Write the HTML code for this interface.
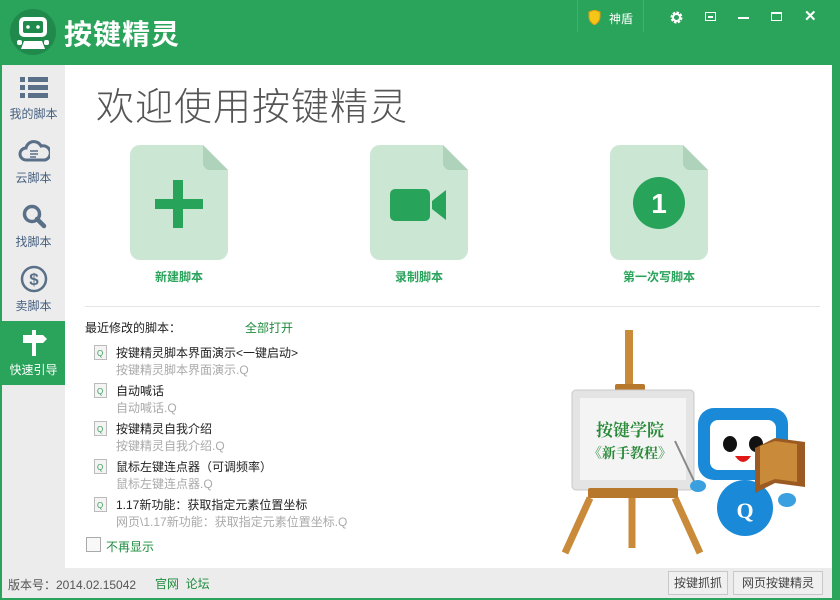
<!DOCTYPE html>
<html><head><meta charset="utf-8"><style>
*{margin:0;padding:0;box-sizing:border-box}
body{width:840px;height:600px;overflow:hidden;font-family:"Liberation Sans","Noto Sans CJK SC",sans-serif;background:#2aa35b;position:relative}
.hdr{position:absolute;left:0;top:0;width:840px;height:65px;background:#2aa35b}
.title{position:absolute;left:64px;top:13px;color:#fff;font-size:28px;font-weight:bold;letter-spacing:1px}
.side{position:absolute;left:2px;top:65px;width:63px;height:503px;background:#ececec}
.nav{position:absolute;left:0;width:63px;height:64px;text-align:center;font-size:12px;color:#466080}
.nav svg{display:block;margin:10px auto 4px}
.main{position:absolute;left:65px;top:65px;width:767px;height:503px;background:#fff}
.foot{position:absolute;left:2px;top:568px;width:830px;height:30px;background:#ececec;font-size:12px;color:#555}
.h1{position:absolute;left:96px;top:76px;font-size:38px;color:#555;letter-spacing:1px;font-family:"Noto Sans CJK SC",sans-serif;font-weight:200}
.tile{position:absolute;top:145px;width:98px;height:115px}
.lbl{position:absolute;top:268px;font-size:12px;color:#2aa35b;font-weight:bold;text-align:center;width:140px}
.it{position:absolute;left:96px;font-size:12px}
.it .a{position:absolute;left:20px;top:0;color:#222;white-space:nowrap}
.it .b{position:absolute;left:20px;top:17px;color:#aaa;white-space:nowrap}
.btn{position:absolute;top:571px;height:24px;border:1px solid #c8c8c8;background:#f0f0f0;font-size:12px;color:#444;text-align:center;line-height:22px}
</style></head><body>
<div class="hdr">
<svg style="position:absolute;left:10px;top:9px" width="46" height="46" viewBox="0 0 46 46"><circle cx="23" cy="23" r="23" fill="#1f8a4c"/><rect x="9" y="8" width="28" height="20" rx="5" fill="#fff"/><rect x="13" y="12" width="20" height="12" rx="2" fill="#1f8a4c"/><circle cx="18" cy="18" r="1.8" fill="#fff"/><circle cx="28" cy="18" r="1.8" fill="#fff"/><path d="M14 32h18l3 8H11z" fill="#fff"/><rect x="7" y="31" width="5" height="5" rx="2" fill="#fff"/><rect x="34" y="31" width="5" height="5" rx="2" fill="#fff"/></svg>
<div class="title">按键精灵</div>
<div style="position:absolute;left:577px;top:0;width:1px;height:32px;background:#3bb46a"></div>
<div style="position:absolute;left:643px;top:0;width:1px;height:32px;background:#3bb46a"></div>
<svg style="position:absolute;left:588px;top:10px" width="13" height="15" viewBox="0 0 13 15"><path d="M1 2L6.5 0 12 2v5c0 4-3 6.5-5.5 8C4 13.5 1 11 1 7z" fill="#f5c518" stroke="#e09a10"/></svg>
<div style="position:absolute;left:609px;top:10px;color:#fff;font-size:12px">神盾</div>
<svg style="position:absolute;left:670px;top:11px" width="13" height="13" viewBox="0 0 13 13"><circle cx="6.5" cy="6.5" r="4.5" fill="none" stroke="#fff" stroke-width="3" stroke-dasharray="2.3 1.2"/><circle cx="6.5" cy="6.5" r="3.5" fill="none" stroke="#fff" stroke-width="2"/></svg>
<div style="position:absolute;left:705px;top:12px;width:11px;height:9px;border:1.5px solid #fff"></div><div style="position:absolute;left:708px;top:16px;width:5px;height:2px;background:#fff"></div>
<div style="position:absolute;left:738px;top:17px;width:11px;height:2px;background:#fff"></div>
<div style="position:absolute;left:771px;top:12px;width:11px;height:9px;border:1.5px solid #fff;border-top-width:2px"></div>
<div style="position:absolute;left:804px;top:7px;color:#fff;font-size:15px;font-weight:bold">✕</div>
</div>
<div class="side">
<div class="nav" style="top:0"><svg width="30" height="26" viewBox="0 0 30 26"><g fill="#5a7088"><rect x="1" y="2" width="5" height="5"/><rect x="9" y="2" width="20" height="5"/><rect x="1" y="10" width="5" height="5"/><rect x="9" y="10" width="20" height="5"/><rect x="1" y="18" width="5" height="5"/><rect x="9" y="18" width="20" height="5"/></g></svg>我的脚本</div>
<div class="nav" style="top:64px"><svg width="32" height="26" viewBox="0 0 32 26"><path d="M8 21a6 6 0 010-12 8 8 0 0115-2 6 6 0 014 14z" fill="none" stroke="#5a7088" stroke-width="3"/><path d="M12 12h8M12 15h8M12 18h6" stroke="#5a7088" stroke-width="1.5"/></svg>云脚本</div>
<div class="nav" style="top:128px"><svg width="30" height="26" viewBox="0 0 30 26"><circle cx="13" cy="11" r="7.5" fill="none" stroke="#5a7088" stroke-width="3.5"/><path d="M18 16l7 7" stroke="#5a7088" stroke-width="4.5" stroke-linecap="round"/></svg>找脚本</div>
<div class="nav" style="top:192px"><svg width="30" height="28" viewBox="0 0 30 28" style="margin-top:8px"><circle cx="15" cy="14" r="12" fill="none" stroke="#5a7088" stroke-width="2.5"/><text x="15" y="20" font-size="17" font-weight="bold" text-anchor="middle" fill="#5a7088" font-family="Liberation Sans">$</text></svg>卖脚本</div>
<div class="nav" style="top:256px;background:#2aa35b;color:#fff"><svg width="30" height="28" viewBox="0 0 30 28" style="margin-top:8px"><path d="M13 1h4v5h-4zM4 6h20l4 4-4 4H4z" fill="#fff"/><rect x="13" y="14" width="4" height="13" fill="#fff"/></svg>快速引导</div>
</div>
<div style="position:absolute;left:58px;top:336px;width:0;height:0;border:7px solid transparent;border-right-color:#fff"></div>
<div class="main"></div>
<div class="h1">欢迎使用按键精灵</div>

<svg class="tile" style="left:130px" viewBox="0 0 98 115"><path d="M10 0H73L98 25V105a10 10 0 01-10 10H10A10 10 0 010 105V10A10 10 0 0110 0z" fill="#cce6d4"/><path d="M73 0L98 25H80a7 7 0 01-7-7z" fill="#aed2ba"/><rect x="43" y="35" width="10" height="48" fill="#27a35a"/><rect x="25" y="54" width="48" height="10" fill="#27a35a"/></svg>
<div class="lbl" style="left:109px">新建脚本</div>
<svg class="tile" style="left:370px" viewBox="0 0 98 115"><path d="M10 0H73L98 25V105a10 10 0 01-10 10H10A10 10 0 010 105V10A10 10 0 0110 0z" fill="#cce6d4"/><path d="M73 0L98 25H80a7 7 0 01-7-7z" fill="#aed2ba"/><rect x="20" y="44" width="40" height="32" rx="5" fill="#27a35a"/><path d="M62 56l14-11v30l-14-11z" fill="#27a35a"/></svg>
<div class="lbl" style="left:349px">录制脚本</div>
<svg class="tile" style="left:610px" viewBox="0 0 98 115"><path d="M10 0H73L98 25V105a10 10 0 01-10 10H10A10 10 0 010 105V10A10 10 0 0110 0z" fill="#cce6d4"/><path d="M73 0L98 25H80a7 7 0 01-7-7z" fill="#aed2ba"/><circle cx="49" cy="58" r="26" fill="#27a35a"/><text x="49" y="68" font-size="28" font-weight="bold" text-anchor="middle" fill="#fff" font-family="Liberation Sans">1</text></svg>
<div class="lbl" style="left:589px">第一次写脚本</div>
<div style="position:absolute;left:85px;top:306px;width:735px;height:1px;background:#e4e4e4"></div>

<div style="position:absolute;left:85px;top:319px;font-size:12px;color:#222">最近修改的脚本：</div>
<div style="position:absolute;left:245px;top:319px;font-size:12px;color:#1e8c3e">全部打开</div>
<div class="it" style="top:344px"><div class="a">按键精灵脚本界面演示&lt;一键启动&gt;</div><div class="b">按键精灵脚本界面演示.Q</div></div>
<div class="it" style="top:382px"><div class="a">自动喊话</div><div class="b">自动喊话.Q</div></div>
<div class="it" style="top:420px"><div class="a">按键精灵自我介绍</div><div class="b">按键精灵自我介绍.Q</div></div>
<div class="it" style="top:458px"><div class="a">鼠标左键连点器（可调频率）</div><div class="b">鼠标左键连点器.Q</div></div>
<div class="it" style="top:496px"><div class="a">1.17新功能：获取指定元素位置坐标</div><div class="b">网页\1.17新功能：获取指定元素位置坐标.Q</div></div>
<svg style="position:absolute;left:94px;top:344px" width="14" height="180"><g fill="#f4f4f4" stroke="#bbb"><rect x="0.5" y="1.5" width="12" height="14"/><rect x="0.5" y="39.5" width="12" height="14"/><rect x="0.5" y="77.5" width="12" height="14"/><rect x="0.5" y="115.5" width="12" height="14"/><rect x="0.5" y="153.5" width="12" height="14"/></g><g fill="#3a9a5a" font-size="8" font-family="Liberation Sans"><text x="3" y="12">Q</text><text x="3" y="50">Q</text><text x="3" y="88">Q</text><text x="3" y="126">Q</text><text x="3" y="164">Q</text></g></svg>
<div style="position:absolute;left:86px;top:537px;width:15px;height:15px;border:1px solid #aaa;background:#f8f8f8"></div>
<div style="position:absolute;left:106px;top:538px;font-size:12px;color:#1e8c3e">不再显示</div>

<svg style="position:absolute;left:550px;top:328px" width="260" height="240" viewBox="0 0 260 240">
<rect x="75" y="2" width="8" height="60" fill="#c98a3a"/><rect x="65" y="56" width="30" height="10" rx="2" fill="#b8782c"/>
<path d="M40 170L15 225M125 170L150 225M82 170v50" stroke="#c98a3a" stroke-width="7"/>
<rect x="22" y="62" width="122" height="100" rx="4" fill="#e4e4e4" stroke="#c8c8c8"/><rect x="30" y="70" width="106" height="82" fill="#f4f4f4"/>
<rect x="38" y="160" width="90" height="10" rx="2" fill="#b8782c"/>
<text x="80" y="108" font-size="17" font-weight="bold" text-anchor="middle" fill="#2a8a3a" font-family="Noto Serif CJK SC,serif">按键学院</text>
<text x="80" y="130" font-size="14" font-weight="bold" text-anchor="middle" fill="#2a8a3a" font-family="Noto Serif CJK SC,serif">《新手教程》</text>
<path d="M125 113L145 155" stroke="#888" stroke-width="2"/><ellipse cx="148" cy="158" rx="8" ry="6" fill="#3aa0e0"/>
<rect x="148" y="80" width="90" height="72" rx="16" fill="#1a8ad8"/><rect x="160" y="92" width="66" height="50" rx="8" fill="#fff"/>
<ellipse cx="180" cy="116" rx="7" ry="8" fill="#111"/><ellipse cx="206" cy="116" rx="7" ry="8" fill="#111"/>
<path d="M185 128q8 12 16 0z" fill="#e01818"/>
<circle cx="195" cy="180" r="28" fill="#1a8ad8"/><text x="195" y="190" font-size="22" font-weight="bold" text-anchor="middle" fill="#fff" font-family="Liberation Serif">Q</text>
<path d="M205 120l20 -10 30 4v45l-30 -4-20 10z" fill="#9a5a22"/><path d="M210 118l15-5 22 3v38l-22-3-15 6z" fill="#c98a3a"/>
<ellipse cx="237" cy="172" rx="9" ry="7" fill="#3aa0e0"/>
</svg>

<div class="foot">
<div style="position:absolute;left:6px;top:8px">版本号：2014.02.15042</div>
<div style="position:absolute;left:153px;top:7px;color:#1e8c3e">官网&nbsp;&nbsp;论坛</div>
</div>
<div class="btn" style="left:668px;width:60px">按键抓抓</div>
<div class="btn" style="left:733px;width:90px">网页按键精灵</div>
</body></html>
